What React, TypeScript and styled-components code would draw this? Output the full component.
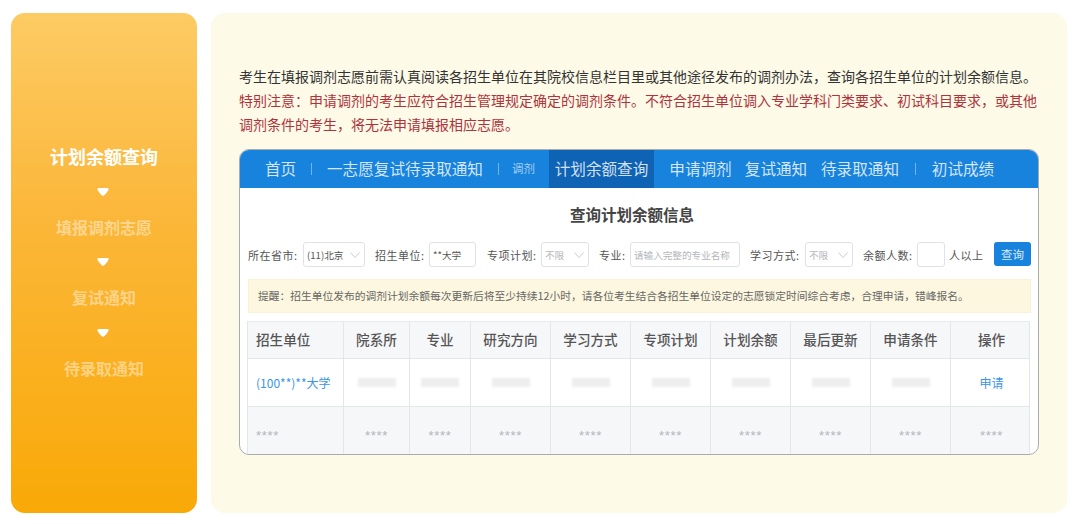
import React from "react";
import styled, { createGlobalStyle } from "styled-components";

const GlobalStyle = createGlobalStyle`
  html, body {
    margin: 0;
    padding: 0;
    background: #ffffff;
  }
  * {
    box-sizing: border-box;
  }
  body {
    font-family: "Noto Sans CJK SC", "Noto Sans", sans-serif;
  }
`;

const Page = styled.div`
  width: 1078px;
  height: 524px;
  display: flex;
  gap: 14px;
  padding: 13px 11px 11px;
  overflow: hidden;
`;

const Sidebar = styled.aside`
  width: 186px;
  height: 500px;
  flex: none;
  display: flex;
  flex-direction: column;
  align-items: center;
  padding-top: 129px;
  border-radius: 14px;
  background: linear-gradient(180deg, #fdcb64 0%, #fbb73a 40%, #f9a907 100%);
`;

const StepLabel = styled.div<{ $active?: boolean }>`
  height: 28px;
  line-height: 28px;
  font-weight: 700;
  font-size: ${(p) => (p.$active ? "18px" : "16px")};
  color: ${(p) => (p.$active ? "#ffffff" : "rgba(255, 255, 255, 0.45)")};
`;

const StepArrow = styled.svg`
  display: block;
  width: 12px;
  height: 8px;
  margin: 17.5px 2px 17px 0;
`;

const Main = styled.main`
  width: 856px;
  height: 500px;
  flex: none;
  padding: 51px 28px 0;
  border-radius: 14px;
  background: #fdfae8;
`;

const Intro = styled.p<{ $alert?: boolean }>`
  margin: 0;
  font-size: 14px;
  line-height: 24px;
  color: ${(p) => (p.$alert ? "#b0323a" : "#333333")};
`;

const Panel = styled.section`
  width: 800px;
  height: 306px;
  margin-top: 13px;
  border: 1px solid #a9abaf;
  border-radius: 10px;
  background: #ffffff;
  overflow: hidden;
`;

const Nav = styled.nav`
  height: 39px;
  display: flex;
  align-items: stretch;
  padding-left: 26px;
  background: #1783dd;
  margin: -1px -1px 0;
`;

const NavItem = styled.div<{ $active?: boolean; $small?: boolean; $w: number; $gap?: number }>`
  width: ${(p) => p.$w}px;
  flex: none;
  margin-right: ${(p) => p.$gap ?? 0}px;
  padding-bottom: 2px;
  display: flex;
  align-items: center;
  justify-content: center;
  white-space: nowrap;
  font-size: ${(p) => (p.$small ? "11.5px" : "15.6px")};
  color: ${(p) => (p.$small ? "rgba(255, 255, 255, 0.6)" : "rgba(255, 255, 255, 0.82)")};
  background: ${(p) => (p.$active ? "#0f63b4" : "transparent")};
`;

const NavDivider = styled.i<{ $w: number }>`
  width: ${(p) => p.$w}px;
  flex: none;
  display: flex;
  align-items: center;
  justify-content: center;
  &::before {
    content: "";
    width: 1px;
    height: 12px;
    background: rgba(255, 255, 255, 0.4);
  }
`;

const Heading = styled.h2`
  margin: 0;
  height: 54px;
  line-height: 53px;
  padding-right: 14px;
  text-align: center;
  font-size: 15.5px;
  font-weight: 700;
  color: #444444;
`;

const Filters = styled.div`
  display: flex;
  align-items: center;
  height: 25px;
  padding-left: 8px;
`;

const FieldLabel = styled.span<{ $w: number; $left?: number }>`
  flex: none;
  width: ${(p) => p.$w}px;
  font-size: 11px;
  letter-spacing: 0.5px;
  color: #555555;
  white-space: nowrap;
  margin-left: ${(p) => p.$left ?? 0}px;
`;

const Control = styled.div<{ $w: number; $muted?: boolean; $left?: number }>`
  position: relative;
  flex: none;
  width: ${(p) => p.$w}px;
  height: 25px;
  margin-left: ${(p) => p.$left ?? 4}px;
  padding-left: 3px;
  display: flex;
  align-items: center;
  font-size: 9.6px;
  color: ${(p) => (p.$muted ? "#b4b6ba" : "#555555")};
  white-space: nowrap;
  background: #ffffff;
  border: 1px solid #dfe2e6;
  border-radius: 3px;
  overflow: hidden;
`;

const Caret = styled.svg`
  position: absolute;
  right: 4px;
  top: 9px;
  width: 10px;
  height: 6px;
`;

const SearchButton = styled.button`
  flex: none;
  width: 37px;
  height: 24px;
  margin: -1px 0 0 10px;
  padding: 0;
  border: 0;
  border-radius: 3px;
  background: #1783dd;
  color: rgba(255, 255, 255, 0.85);
  font-family: inherit;
  font-size: 11.5px;
`;

const Notice = styled.div`
  width: 783px;
  height: 34px;
  margin: 12px 0 8px 8px;
  padding-left: 9px;
  line-height: 32px;
  font-size: 10.75px;
  color: #666666;
  white-space: nowrap;
  background: #fdf7df;
  border: 1px solid #f9f2d4;
`;

const TableGrid = styled.div`
  width: 783px;
  margin-left: 7px;
  display: grid;
  grid-template-columns: 96px 66px 61px repeat(6, 80px) 79px;
  grid-template-rows: 38px 48px 48px;
  border-left: 1px solid #e4e7ea;
`;

const Cell = styled.div<{ $head?: boolean; $tint?: boolean; $first?: boolean; $last?: boolean }>`
  display: flex;
  align-items: center;
  justify-content: ${(p) => (p.$first ? "flex-start" : "center")};
  padding-left: ${(p) => (p.$first ? "8px" : p.$last ? "3px" : "0")};
  padding-bottom: ${(p) => (p.$head ? "2px" : "0")};
  font-size: ${(p) => (p.$head ? "13.6px" : "12px")};
  font-weight: ${(p) => (p.$head ? 500 : 400)};
  color: #555555;
  white-space: nowrap;
  background: ${(p) => (p.$head || p.$tint ? "#f6f7f9" : "#ffffff")};
  border-right: 1px solid #e4e7ea;
  border-top: ${(p) => (p.$head ? "1px solid #e9ecef" : "0")};
  border-bottom: 1px solid #e4e7ea;
`;

const CellLink = styled.span`
  font-size: 12px;
  color: #3a94e6;
`;

const Masked = styled.span`
  width: 38px;
  height: 9px;
  background: #eeeeee;
  filter: blur(1px);
`;

const Stars = styled.span`
  font-family: "Liberation Sans", Arial, sans-serif;
  font-size: 13px;
  letter-spacing: 0.7px;
  color: #b3b5b9;
  line-height: 12px;
  padding-top: 10px;
`;

const steps = ["计划余额查询", "填报调剂志愿", "复试通知", "待录取通知"];
const columns = ["招生单位", "院系所", "专业", "研究方向", "学习方式", "专项计划", "计划余额", "最后更新", "申请条件", "操作"];

function ChevronDown() {
  return (
    <Caret viewBox="0 0 10 6">
      <path d="M0.5 0.5 L5 5.5 L9.5 0.5" fill="none" stroke="#c9ccd1" strokeWidth="1" />
    </Caret>
  );
}

export default function App() {
  const lastIndex = columns.length - 1;
  return (
    <>
      <GlobalStyle />
      <Page>
        <Sidebar>
          {steps.map((step, i) => (
            <React.Fragment key={step}>
              <StepLabel $active={i === 0}>{step}</StepLabel>
              {i < steps.length - 1 && (
                <StepArrow viewBox="0 0 12 8">
                  <path
                    d="M2 0 H10 Q12.4 0 11.4 2 Q10 4.8 7 7.5 Q6 8.2 5 7.5 Q2 4.8 0.6 2 Q-0.4 0 2 0 Z"
                    fill="#ffffff"
                  />
                </StepArrow>
              )}
            </React.Fragment>
          ))}
        </Sidebar>
        <Main>
          <Intro>考生在填报调剂志愿前需认真阅读各招生单位在其院校信息栏目里或其他途径发布的调剂办法，查询各招生单位的计划余额信息。</Intro>
          <Intro $alert>
            特别注意：申请调剂的考生应符合招生管理规定确定的调剂条件。不符合招生单位调入专业学科门类要求、初试科目要求，或其他调剂条件的考生，将无法申请填报相应志愿。
          </Intro>
          <Panel>
            <Nav>
              <NavItem $w={31}>首页</NavItem>
              <NavDivider $w={30} />
              <NavItem $w={158}>一志愿复试待录取通知</NavItem>
              <NavDivider $w={28} />
              <NavItem $w={23} $small $gap={14}>
                调剂
              </NavItem>
              <NavItem $w={105} $active>
                计划余额查询
              </NavItem>
              <NavItem $w={93}>申请调剂</NavItem>
              <NavItem $w={58}>复试通知</NavItem>
              <NavItem $w={110}>待录取通知</NavItem>
              <NavDivider $w={1} />
              <NavItem $w={94}>初试成绩</NavItem>
            </Nav>
            <Heading>查询计划余额信息</Heading>
            <Filters>
              <FieldLabel $w={50}>所在省市:</FieldLabel>
              <Control $w={62} $left={5}>
                (11)北京
                <ChevronDown />
              </Control>
              <FieldLabel $w={50} $left={10}>
                招生单位:
              </FieldLabel>
              <Control $w={47}>**大学</Control>
              <FieldLabel $w={50} $left={11}>
                专项计划:
              </FieldLabel>
              <Control $w={48} $muted>
                不限
                <ChevronDown />
              </Control>
              <FieldLabel $w={27} $left={10}>
                专业:
              </FieldLabel>
              <Control $w={110} $muted>
                请输入完整的专业名称
              </Control>
              <FieldLabel $w={50} $left={10}>
                学习方式:
              </FieldLabel>
              <Control $w={48} $muted $left={5}>
                不限
                <ChevronDown />
              </Control>
              <FieldLabel $w={50} $left={10}>
                余额人数:
              </FieldLabel>
              <Control $w={28} />
              <FieldLabel $w={35} $left={4}>
                人以上
              </FieldLabel>
              <SearchButton>查询</SearchButton>
            </Filters>
            <Notice>
              提醒：招生单位发布的调剂计划余额每次更新后将至少持续12小时，请各位考生结合各招生单位设定的志愿锁定时间综合考虑，合理申请，错峰报名。
            </Notice>
            <TableGrid>
              {columns.map((c, i) => (
                <Cell key={c} $head $first={i === 0} $last={i === lastIndex}>
                  {c}
                </Cell>
              ))}
              {columns.map((c, i) => (
                <Cell key={c} $first={i === 0} $last={i === lastIndex}>
                  {i === 0 ? (
                    <CellLink>(100**)**大学</CellLink>
                  ) : i === lastIndex ? (
                    <CellLink>申请</CellLink>
                  ) : (
                    <Masked />
                  )}
                </Cell>
              ))}
              {columns.map((c, i) => (
                <Cell key={c} $tint $first={i === 0} $last={i === lastIndex}>
                  <Stars>****</Stars>
                </Cell>
              ))}
            </TableGrid>
          </Panel>
        </Main>
      </Page>
    </>
  );
}
